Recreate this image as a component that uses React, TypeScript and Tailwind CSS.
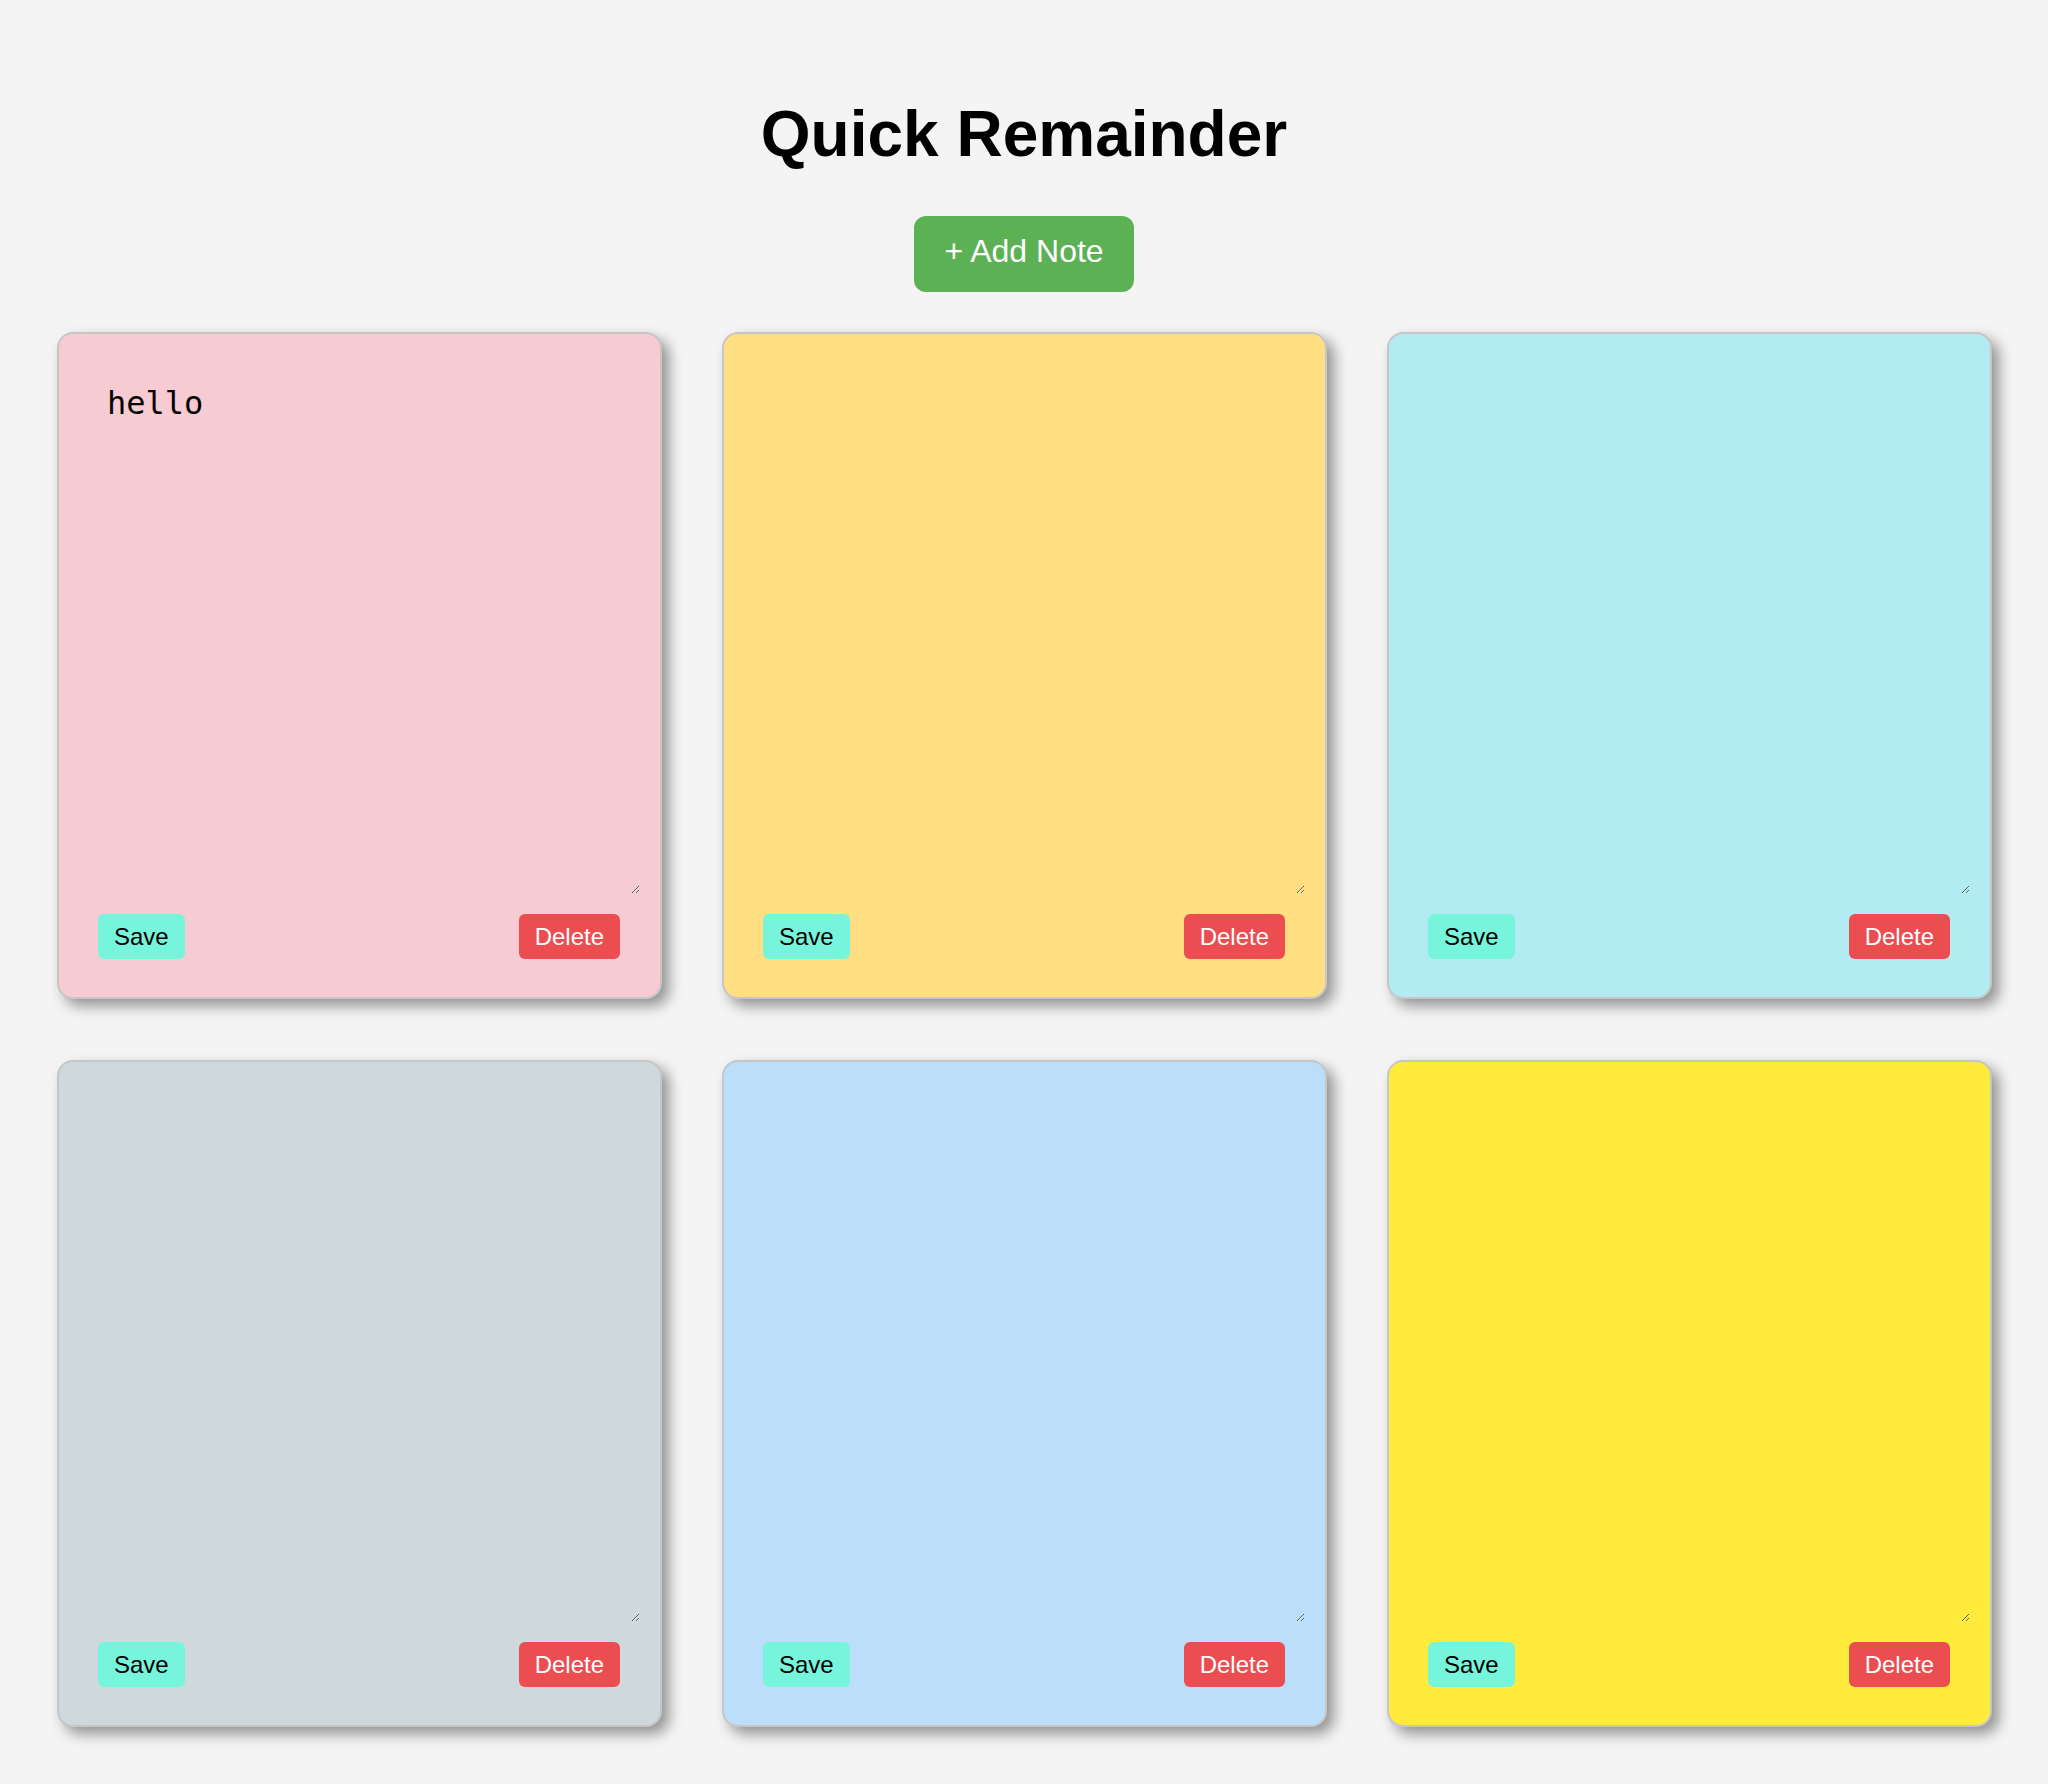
import React, { useState } from "react";

type Note = {
  id: number;
  color: string;
  text: string;
};

const initialNotes: Note[] = [
  { id: 1, color: "bg-[#f6cbd1]", text: "hello" },
  { id: 2, color: "bg-[#ffdf82]", text: "" },
  { id: 3, color: "bg-[#b2ebf2]", text: "" },
  { id: 4, color: "bg-[#cfd8dc]", text: "" },
  { id: 5, color: "bg-[#bbdefb]", text: "" },
  { id: 6, color: "bg-[#ffeb3b]", text: "" },
];

const NoteCard: React.FC<{
  note: Note;
  onChange: (id: number, value: string) => void;
  onDelete: (id: number) => void;
}> = ({ note, onChange, onDelete }) => {
  return (
    <div
      className={`${note.color} flex h-[667px] flex-col rounded-[16px] border-2 border-[#c6c6c6] p-[20px] shadow-[7px_7px_14px_rgba(0,0,0,0.4)]`}
    >
      <textarea
        value={note.text}
        onChange={(e) => onChange(note.id, e.target.value)}
        className="w-full flex-1 border-none bg-transparent px-[28px] pt-[25px] pb-[28px] text-[32px] leading-normal text-black outline-none"
        style={{ fontFamily: '"DejaVu Sans Mono", monospace' }}
      />
      <div className="mt-[20px] mb-[18px] flex items-center justify-between pl-[19px] pr-[20px]">
        <button className="rounded-[6px] bg-[#76f5dc] px-[16px] py-[9px] text-[24px] leading-[27px] text-black">
          Save
        </button>
        <button
          onClick={() => onDelete(note.id)}
          className="rounded-[6px] bg-[#eb4d50] px-[16px] py-[9px] text-[24px] leading-[27px] text-white"
        >
          Delete
        </button>
      </div>
    </div>
  );
};

export default function App() {
  const [notes, setNotes] = useState<Note[]>(initialNotes);

  const handleChange = (id: number, value: string) => {
    setNotes((prev) => prev.map((n) => (n.id === id ? { ...n, text: value } : n)));
  };

  const handleDelete = (id: number) => {
    setNotes((prev) => prev.filter((n) => n.id !== id));
  };

  return (
    <div
      className="min-h-screen bg-[#f4f4f4] pb-[57px]"
      style={{ fontFamily: '"Liberation Sans", Arial, sans-serif' }}
    >
      <div className="flex flex-col items-center pt-[97px]">
        <h1 className="text-[64px] font-bold leading-[74px] text-black">Quick Remainder</h1>
        <button className="mt-[45px] rounded-[12px] bg-[#5cb155] px-[30px] pt-[17px] pb-[23px] text-[32px] leading-[36px] text-white">
          + Add Note
        </button>
      </div>
      <div className="mt-[40px] grid grid-cols-3 gap-x-[60px] gap-y-[61px] pl-[57px] pr-[56px]">
        {notes.map((note) => (
          <NoteCard key={note.id} note={note} onChange={handleChange} onDelete={handleDelete} />
        ))}
      </div>
    </div>
  );
}
